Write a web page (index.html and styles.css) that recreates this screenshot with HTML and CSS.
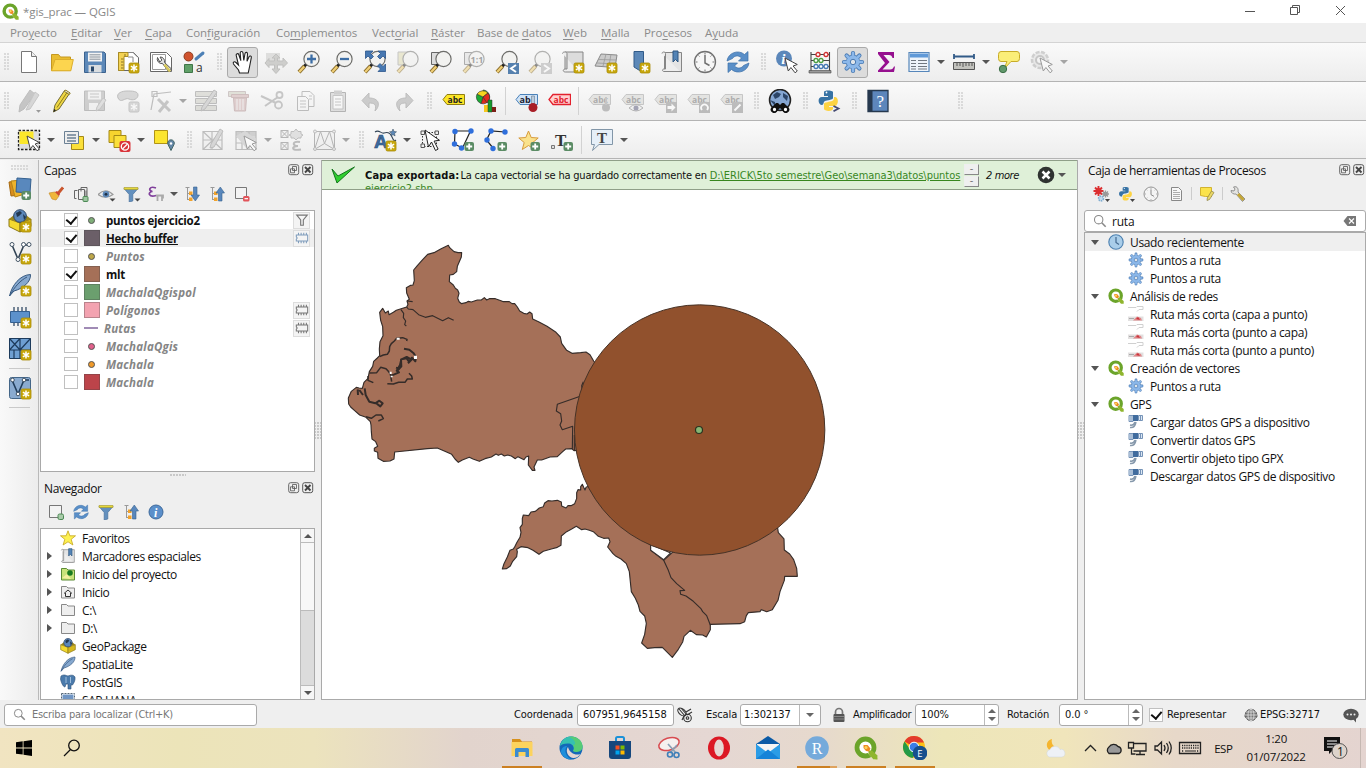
FILE: index.html
```html
<!DOCTYPE html>
<html lang="es">
<head>
<meta charset="utf-8">
<title>*gis_prac — QGIS</title>
<link rel="stylesheet" href="styles.css">
</head>
<body>
<svg class="defs" aria-hidden="true">
<defs>
<!-- shared badges -->
<g id="nb"><rect x="13" y="13" width="10" height="10" rx="1.5" fill="#c8a80c" stroke="#a88c08" stroke-width=".8"/><path d="M18 14.4v7.2M14.9 16.2l6.2 3.6M14.9 19.8l6.2-3.6" stroke="#fff" stroke-width="1.5"/></g>
<g id="pb"><rect x="13.5" y="14" width="9.5" height="9" rx="2" fill="#5b8c65"/><path d="M18.2 15.5v6M15.2 18.5h6" stroke="#fff" stroke-width="1.8"/></g>
<g id="lens"><circle cx="14.5" cy="9" r="7.6" fill="#f2f2f0" stroke="#6d6d6a" stroke-width="1.2"/><path d="M9 14.5l-2 2" stroke="#222" stroke-width="3"/><path d="M7.5 16.2l-5.5 6" stroke="#8a6d2c" stroke-width="4"/><path d="M7.2 16.5l-5 5.4" stroke="#f0cf75" stroke-width="2.2"/></g>
<g id="cursor"><path d="M10 8l3.3 13 2.6-3.5 4.2 5.3 2.2-1.8-4.2-5 4.2-1.5z" fill="#fff" stroke="#444" stroke-width="1"/></g>
<g id="tag"><path d="M6 5.5h17.5v10H6L2 10.5z"/></g>

<symbol id="qgis" viewBox="0 0 24 24"><circle cx="11.500" cy="11.500" r="8.500" fill="#fff" stroke="#6ba42a" stroke-width="4.800"/><path d="M13.500 12l10.500 9-3.500 3.500L12 15z" fill="#fff"/><path d="M14.500 14.500h3.500l5.500 5v4H19.500l-5-5.500z" fill="#8fb52d"/><path d="M9.500 9h4l3 3.500-1.500 3-3-.5-2.500-3z" fill="#ee8a23"/><circle cx="12" cy="11.500" r="1.600" fill="#f9d65c"/></symbol>
<symbol id="new" viewBox="0 0 24 24"><path d="M4.500 1.500h10l5 5v16h-15z" fill="#fff" stroke="#777"/><path d="M14.500 1.500v5h5" fill="#eee" stroke="#777"/></symbol>
<symbol id="open" viewBox="0 0 24 24"><path d="M1.500 20.500V4.500h7l2 2.500h10v13.500z" fill="#e9bd31" stroke="#c59820"/><path d="M1.500 20.800L5 9.500h18.300l-2.500 11.300z" fill="#fcd54f" stroke="#dcae2c"/></symbol>
<symbol id="save" viewBox="0 0 24 24"><path d="M1.500 2h19.500l1.500 1.500V22.500h-21z" fill="#5c88b8" stroke="#3b628e"/><path d="M5 2.500h14v9H5z" fill="#f3f3f3"/><path d="M6.500 4.800h11M6.500 7h11M6.500 9.200h11" stroke="#88929c"/><path d="M5.500 15h13v7.500h-13z" fill="#d9dde0"/><path d="M8 16.500h3v5H8z" fill="#28476a"/></symbol>
<symbol id="layout" viewBox="0 0 24 24"><path d="M2.500 2.500h15l5 5v13h-20z" fill="#fff" stroke="#666"/><path d="M2.500 2.500H12v4H8v14H2.500z" fill="#f3d254" stroke="#a88b24"/><path d="M12 2.500h5l5 5M12 7h5v5" fill="none" stroke="#888"/><path d="M9 4v2M5 9h2.500M5 12h2.500M5 15h2.500M5 18h2.500" stroke="#8b7526"/><use href="#nb"/></symbol>
<symbol id="mgr" viewBox="0 0 24 24"><path d="M1.500 2.500h16l5 5v14h-21z" fill="#fff" stroke="#666"/><path d="M3.500 4.500h13v15h-13z" fill="none" stroke="#9a9a9a"/><path d="M8.500 7.500a4.500 4.500 0 0 0 5 6l6 8 3-2.500-7-6.500a4.400 4.400 0 0 0-4.500-5.500l1.800 3-2 2z" fill="#e2e2e0" stroke="#555"/><path d="M15.500 14.500l5.500 7" stroke="#d8c95c" stroke-width="2.500"/></symbol>
<symbol id="style" viewBox="0 0 24 24"><circle cx="6.500" cy="6.500" r="4.500" fill="#d0532e" stroke="#8c3a1e"/><path d="M2.500 14.500h8v8h-8z" fill="#60a068" stroke="#3f7648"/><path d="M14 9l7-6" stroke="#4d80b6" stroke-width="3" stroke-linecap="round"/><text x="14" y="22" font-family="Open Sans" font-size="12" fill="#333">a</text></symbol>
<symbol id="hand" viewBox="0 0 24 24"><path d="M8.500 23l-1-3-5-6c-1-2 1-3 2.500-1.500L7.500 15 5.200 5.500c-.4-2 2-2.500 2.600-.8l2 6L9.200 3c0-2 2.600-2 2.800 0l.8 7.500L14 3.500c.4-1.800 2.700-1.400 2.500.4l-.5 7.500 2-4.600c.8-1.500 2.700-.8 2.300.8l-1.600 8.400-1.500 7z" fill="#fff" stroke="#222" stroke-width="1.100"/></symbol>
<symbol id="panto" viewBox="0 0 24 24"><path d="M2 3h14v9H2z" fill="#c8c8c6"/><path d="M12 4l4 4h-2.500v3H19V8l4.500 5L19 17.500V15h-5.500v4H16l-4 4.500L8 19h2.500v-4H5v2.500L1 13l4-4.500V11h5.500V8H8z" fill="#aaaaa6" stroke="#8e8e8b"/></symbol>
<symbol id="zin" viewBox="0 0 24 24"><use href="#lens"/><path d="M14.500 4.500v9M10 9h9" stroke="#3d6ea5" stroke-width="2.300"/></symbol>
<symbol id="zout" viewBox="0 0 24 24"><use href="#lens"/><path d="M10 9h9" stroke="#3d6ea5" stroke-width="2.300"/></symbol>
<symbol id="zfull" viewBox="0 0 24 24"><use href="#lens"/><path d="M2.500 1H10L7.500 3.500l3 3L8 9 5 6 2.500 8.500zM22.500 1v7.500L20 6l-3 3-2.500-2.500 3-3L15 1zM22.500 21.500H15l2.500-2.500-3-3 2.500-2.500 3 3 2.500-2.500z" fill="#4778b2" stroke="#2c568b" stroke-width=".8"/></symbol>
<symbol id="zsel" viewBox="0 0 24 24"><path d="M2 2h11v13H2z" fill="#ddd9ac" stroke="#999"/><use href="#lens"/></symbol>
<symbol id="zlay" viewBox="0 0 24 24"><path d="M2.500 2.500h13v12h-13z" fill="#ddd" stroke="#666"/><use href="#lens"/></symbol>
<symbol id="z11" viewBox="0 0 24 24"><path d="M2.500 2.500h13v12h-13z" fill="#ddd" stroke="#666"/><use href="#lens"/><text x="8.500" y="12.500" font-family="Open Sans" font-weight="700" font-size="9" fill="#555">1:1</text></symbol>
<symbol id="zprev" viewBox="0 0 24 24"><use href="#lens"/><path d="M13 13h11v11H13z" fill="#5580ae"/><path d="M21 15l-5 3.500 5 3.500" fill="none" stroke="#fff" stroke-width="2"/></symbol>
<symbol id="znext" viewBox="0 0 24 24"><use href="#lens"/><path d="M13 13h11v11H13z" fill="#aaa"/><path d="M16 15l5 3.500-5 3.500" fill="none" stroke="#fff" stroke-width="2"/></symbol>
<symbol id="map" viewBox="0 0 24 24"><path d="M4 2h18v19H4z" fill="#dcdcdc" stroke="#858585"/><path d="M1.500 3.500c0-2 4.500-2 4.500 0V19H4.500c-3 0-3 3 0 3H18" fill="#eee" stroke="#858585"/><use href="#nb"/></symbol>
<symbol id="map3" viewBox="0 0 24 24"><path d="M7 4l16 1-2 13-7-1-13-1z" fill="#cbcbcb" stroke="#8a8a8a"/><path d="M4 9.500l18 .5M3 13l19 1M12 4l-3 12M17 4l-2 12" stroke="#999" stroke-width=".8"/><use href="#nb"/></symbol>
<symbol id="bmk" viewBox="0 0 24 24"><path d="M7 1.500h9.500V22l-4.700-2L7 17z" fill="#5c88b8" stroke="#315b89"/><use href="#nb"/></symbol>
<symbol id="bmks" viewBox="0 0 24 24"><path d="M4.500 2.500h17v19h-17z" fill="#e4e4e4" stroke="#858585"/><path d="M2 3.500c0-2 3.500-2 3.500 0V19H4c-2 0-2 2.500 0 2.500h16" fill="#eee" stroke="#858585"/><path d="M13 1h5v11l-2.500-2.500L13 12z" fill="#5484b6" stroke="#2f5781"/></symbol>
<symbol id="clock" viewBox="0 0 24 24"><circle cx="12" cy="12" r="10.500" fill="#f6f6f6" stroke="#707070" stroke-width="1.300"/><path d="M12 5v8l4.500 2.500" fill="none" stroke="#707070" stroke-width="1.500"/><path d="M12 2.500v2M12 19.500v2M2.500 12h2M19.500 12h2M5.500 5.500l1 1M18.500 5.500l-1 1M5.500 18.500l1-1M18.500 18.500l-1-1" stroke="#777"/></symbol>
<symbol id="refresh" viewBox="0 0 24 24"><path d="M1 11C2 3 12-1 18.500 4.500L22 1.500v9.500h-9.500l3-3C12 4.500 8 6 6.500 8.500z" fill="#5a8fc8" stroke="#3d70a8" stroke-width=".7"/><path d="M23 13c-1 8-11 12-17.500 6.500L2 22.500V13h9.500l-3 3c3.500 3.500 7.500 2 9-.5z" fill="#5a8fc8" stroke="#3d70a8" stroke-width=".7"/></symbol>
<symbol id="ident" viewBox="0 0 24 24"><circle cx="9" cy="8.500" r="8" fill="#5b87ba"/><text x="6.300" y="14" font-family="Liberation Serif" font-weight="700" font-style="italic" font-size="15" fill="#fff">i</text><use href="#cursor"/></symbol>
<symbol id="abacus" viewBox="0 0 24 24"><path d="M3 2v20M21.500 2v20M3 4.500h18.500M3 10.500h18.500M3 16.500h18.500" stroke="#444" stroke-width="1.100" fill="none"/><path d="M1 20.500h22v2.500H1z" fill="#999" stroke="#444" stroke-width=".6"/><g fill="#fff" stroke-width="1.300"><g stroke="#d12f2f"><circle cx="10" cy="4.500" r="2"/><circle cx="18" cy="4.500" r="2"/></g><g stroke="#4a9d42"><circle cx="8" cy="10.500" r="2"/><circle cx="13" cy="10.500" r="2"/></g><g stroke="#4479b4"><circle cx="8" cy="16.500" r="2"/><circle cx="13" cy="16.500" r="2"/><circle cx="18" cy="16.500" r="2"/></g></g></symbol>
<symbol id="gear" viewBox="0 0 24 24"><g stroke="#4a7ab2" stroke-width="4.200" stroke-linecap="round"><path d="M12 3v18M3 12h18M5.600 5.600l12.800 12.800M18.400 5.600L5.600 18.400"/></g><circle cx="12" cy="12" r="7.200" fill="#4a7ab2"/><g stroke="#8cb8ea" stroke-width="2.600" stroke-linecap="round"><path d="M12 3v18M3 12h18M5.600 5.600l12.800 12.800M18.400 5.600L5.600 18.400"/></g><circle cx="12" cy="12" r="6.500" fill="#8cb8ea"/><circle cx="12" cy="12" r="2.700" fill="#e0e5ea" stroke="#4a7ab2"/></symbol>
<symbol id="sigma" viewBox="0 0 24 24"><path d="M4 2h16v6h-1.500c-.5-2-1.500-3-3.500-3H9.500l6 7-7 7.500H16c2.500 0 3-1 4-3h1l-1 5.500H4v-1.500L11 13 4 4z" fill="#96108f"/></symbol>
<symbol id="table" viewBox="0 0 24 24"><path d="M2 2.500h20v19H2z" fill="#eef4fa" stroke="#5686ba" stroke-width="1.200"/><path d="M3 3.500h18v4H3z" fill="#5f99d8"/><path d="M4 10.500h5M11 10.500h9M4 13.500h5M11 13.500h9M4 16.500h5M11 16.500h9M4 19h5M11 19h9" stroke="#707880"/></symbol>
<symbol id="measure" viewBox="0 0 24 24"><path d="M2 6.500h20M2 4v5M22 4v5" stroke="#325b88" stroke-width="1.800"/><path d="M1.500 12.500h21v7h-21z" fill="#c2c2bd" stroke="#555"/><path d="M5 13v3M8 13v3M11 13v4M14 13v3M17 13v3M20 13v3" stroke="#555"/></symbol>
<symbol id="tips" viewBox="0 0 24 24"><path d="M4 1.500h16q2.500 0 2.500 3v4q0 3-2.500 3h-6L7 19l3-7.500H4q-2.500 0-2.500-3v-4q0-3 2.500-3z" fill="#fbee78" stroke="#c8ac28"/><circle cx="6" cy="19" r="3.700" fill="#60986b" stroke="#3b6d45"/></symbol>
<symbol id="action" viewBox="0 0 24 24"><circle cx="10" cy="10" r="8" fill="#ddd" stroke="#aaa" stroke-width="2.500" stroke-dasharray="4 1.500"/><circle cx="10" cy="10" r="4" fill="#f4f4f4" stroke="#999" stroke-width="2"/><use href="#cursor"/></symbol>

<symbol id="edits" viewBox="0 0 24 24"><path d="M13 1l5 4L7 20l-5 3 1-7z" fill="#999" stroke="#888"/><path d="M18 3l4 3-9 14-4 1z" fill="#bbb" stroke="#999"/><path d="M19 21h5l-2.500 2.800z" fill="#444"/></symbol>
<symbol id="pencil" viewBox="0 0 24 24"><path d="M14.500 1.500l5 3L9 20l-5.500 3L5 16z" fill="#efd744" stroke="#726b38"/><path d="M17 3.500L7 18.500M15.500 1l-1 1.500 4.800 3 .9-1.500z" stroke="#8b7b1b" fill="#eee"/><path d="M3.500 23l.6-3 2 1.300z" fill="#222"/></symbol>
<symbol id="savee" viewBox="0 0 24 24"><path d="M1.500 2h20v19.500h-20z" fill="#aaa" stroke="#888"/><path d="M5 2.500h13v8H5zM6 14h9v7H6z" fill="#eee"/><path d="M7 5h9M7 8h9" stroke="#999"/><path d="M20 9l3 2-6 9-4 2 1-4z" fill="#ccc" stroke="#999"/></symbol>
<symbol id="poly" viewBox="0 0 24 24"><path d="M2 9c-2-5 4-7 9-7s11 0 11 4-5 6-9 4-8 5-11-1z" fill="#bbb" stroke="#888"/><rect x="13" y="13" width="10" height="10" rx="1.500" fill="#bbb" stroke="#999"/><path d="M18 14.500v7M15 16l6 4M15 20l6-4" stroke="#fff" stroke-width="1.300"/></symbol>
<symbol id="vertex" viewBox="0 0 24 24"><path d="M2 21L5 5l17-2M3 2.500h5v5H3z" fill="none" stroke="#888" stroke-width="1.200"/><path d="M10 23l9-11M9 10l12 12" stroke="#999" stroke-width="3"/></symbol>
<symbol id="attrs" viewBox="0 0 24 24"><path d="M1.500 2.500h21v5h-21zM1.500 9.500h21v5h-21zM1.500 16.500h21v5h-21z" fill="#c9c9c0" stroke="#888"/><path d="M20 1l3 2L11 20l-4 2 1-4z" fill="#bbb" stroke="#888"/></symbol>
<symbol id="trash" viewBox="0 0 24 24"><path d="M1.500 2.500h17v5h-17z" fill="#ccb" stroke="#a99"/><path d="M4.500 5.500h17v3h-17zM6.500 9h13l-1 13h-11z" fill="#caa" stroke="#a88"/><path d="M10 10v11M13 10v11M16 10v11" stroke="#eee"/></symbol>
<symbol id="cut" viewBox="0 0 24 24"><path d="M1 7l15 7M5 17L18 8" stroke="#999" stroke-width="2"/><circle cx="19.500" cy="6" r="3" fill="none" stroke="#999" stroke-width="1.800"/><circle cx="18.500" cy="16" r="3.500" fill="none" stroke="#999" stroke-width="1.800"/></symbol>
<symbol id="copy" viewBox="0 0 24 24"><path d="M9 2.500h8l4 4v11H9z" fill="#f6f6f6" stroke="#888"/><path d="M4.500 7.500h8l3 3v11h-11z" fill="#f6f6f6" stroke="#888"/><path d="M7 12h6M7 15h6M7 18h6M16 7h3M16 10h3" stroke="#999"/></symbol>
<symbol id="paste" viewBox="0 0 24 24"><path d="M4.500 3.500h15v19h-15z" fill="#ccc" stroke="#777"/><path d="M7 6.500h10v13.500H7z" fill="#fafafa" stroke="#999"/><path d="M8 1.500h8v4H8z" fill="#aaa"/><path d="M9 10h6M9 13h6M9 16h6" stroke="#999"/></symbol>
<symbol id="undo" viewBox="0 0 24 24"><path d="M10 4v5c10 0 12 7 6 13 2-7-1-8-6-8v5L3 11.500z" fill="#a5a5a5" stroke="#888"/></symbol>
<symbol id="redo" viewBox="0 0 24 24"><path d="M14 4v5C4 9 2 16 8 22c-2-7 1-8 6-8v5l7-7.500z" fill="#a5a5a5" stroke="#888"/></symbol>
<symbol id="abc" viewBox="0 0 24 24"><g fill="#fce627" stroke="#8f7d13"><use href="#tag"/></g><text x="6.500" y="13.500" font-family="Open Sans" font-weight="700" font-size="8.500" fill="#222">abc</text></symbol>
<symbol id="diag" viewBox="0 0 24 24"><path d="M9 1a7 7 0 0 1 6 10L9 8z" fill="#1bab35" stroke="#333" stroke-width=".6"/><path d="M9 8l6 3a7 7 0 0 1-8 3.500z" fill="#e02b1d" stroke="#333" stroke-width=".6"/><path d="M9 8l-2 6.500A7 7 0 0 1 3 5z" fill="#1bab35" stroke="#333" stroke-width=".6"/><path d="M9 8L3 5a7 7 0 0 1 11-1z" fill="#f6d61d" stroke="#333" stroke-width=".6"/><path d="M9 8l5-4a7 7 0 0 1-1 10z" fill="#e02b1d" stroke="#333" stroke-width=".6"/><path d="M10 16h4v7h-4z" fill="#f6c81d"/><path d="M14 11h4v12h-4z" fill="#159b2b" stroke="#333" stroke-width=".5"/><path d="M18 18h4v5h-4z" fill="#7c2017"/></symbol>
<symbol id="abpin" viewBox="0 0 24 24"><g fill="#cfe3f8" stroke="#4a81b8"><use href="#tag"/></g><text x="5.500" y="13.500" font-family="Open Sans" font-weight="700" font-size="9" fill="#223">ab</text><path d="M17.500 7h3v9h-3z" fill="#bcd" stroke="#789" stroke-width=".7"/><circle cx="19" cy="18.500" r="4.500" fill="#a81d26"/></symbol>
<symbol id="abcr" viewBox="0 0 24 24"><g fill="#ffd0d0" stroke="#e3202d" stroke-width="1.300"><use href="#tag"/></g><text x="6.500" y="13.500" font-family="Open Sans" font-weight="700" font-size="8.500" fill="#e3202d">abc</text></symbol>
<symbol id="abgr" viewBox="0 0 24 24"><g fill="#d4d4d0" stroke="#999"><use href="#tag"/></g><text x="6" y="13.500" font-family="Open Sans" font-weight="700" font-size="8.500" fill="#666">abc</text></symbol>
<symbol id="meta" viewBox="0 0 24 24"><circle cx="12" cy="11" r="10.500" fill="#85a6d2" stroke="#222" stroke-width="1.500"/><path d="M5 6l4-3 4 2-2 3-4 2zM15 4l5 3-1 5-4-4zM2 11l5 2v4z" fill="#2c4567"/><path d="M8 14h2l2 2 2-2h2l5 5a3 3 0 0 1-6 3l-3-3-3 3a3 3 0 0 1-6-3z" fill="#111"/><circle cx="6.500" cy="20.500" r="2.400" fill="#fff" stroke="#111" stroke-width="1.500"/><circle cx="17.500" cy="20.500" r="2.400" fill="#fff" stroke="#111" stroke-width="1.500"/></symbol>
<symbol id="py" viewBox="0 0 24 24"><path d="M7 3c0-2 8-2 9 0v6c0 2-6 2-8 3s-1 4-3 4c-4 0-5-8 0-8h6V7H7z" fill="#3772a4"/><path d="M17 8c5-1 5 8 1 9h-6v1h4v2c-1 3-9 2-9 0v-5c0-2 6-2 8-3s2-2 2-4z" fill="#fdd343"/><circle cx="9.500" cy="3.500" r=".9" fill="#fff"/></symbol>
<symbol id="pycon" viewBox="0 0 24 24"><use href="#py" width="24" height="24"/><path d="M16.500 17l5 2.500-5 2.800" fill="none" stroke="#444a72" stroke-width="1.800"/></symbol>
<symbol id="help" viewBox="0 0 24 24"><path d="M2 1.500h20v21H2z" fill="#5d86bb" stroke="#26384e" stroke-width="1.300"/><path d="M2 1.500h4.500v21H2z" fill="#26384e"/><text x="10.500" y="17.500" font-family="Liberation Serif" font-size="17" fill="#fff">?</text></symbol>

<symbol id="sel" viewBox="0 0 24 24"><path d="M1.500 2.500h21v19h-21z" fill="#ddd" stroke="#222" stroke-width="1.300" stroke-dasharray="2.500 1.500"/><path d="M2.500 3.500h14V16h-14z" fill="#fbe72b"/><use href="#cursor"/></symbol>
<symbol id="selform" viewBox="0 0 24 24"><path d="M9.500 8.500h12v13h-12z" fill="#fbe03a" stroke="#a48917"/><path d="M2.500 3.500h14v12h-14z" fill="#eee" stroke="#6b8094"/><path d="M5 7h9M5 10h9M5 13h9" stroke="#6b8094" stroke-width="1.300"/></symbol>
<symbol id="desel" viewBox="0 0 24 24"><path d="M2 2.500h12v12H2z" fill="#f7d42e" stroke="#a48917"/><path d="M7 7.500h12v12H7z" fill="#fbe03a" stroke="#a48917"/><rect x="12.500" y="13" width="11" height="11" rx="2" fill="#d9343a"/><circle cx="18" cy="18.500" r="3.700" fill="none" stroke="#fff" stroke-width="1.300"/><path d="M15.500 21l5-5" stroke="#fff" stroke-width="1.300"/></symbol>
<symbol id="selloc" viewBox="0 0 24 24"><path d="M2.500 2.500h13v13h-13z" fill="#fce52e" stroke="#b09317"/><path d="M19 22.500l-3-6a3.300 3.300 0 1 1 6 0z" fill="#6487a8" stroke="#466"/><circle cx="19" cy="15.500" r="1.200" fill="#fff"/></symbol>
<symbol id="d1" viewBox="0 0 24 24"><path d="M2 3.500h19v18H2zM2 12h19M2 3.500l19 18M21 3.500l-19 18M11 3.500v18" stroke="#888" fill="#eee" stroke-width="1.200"/><path d="M19 1l3 2-9 16-4 1 1-4z" fill="#bbb" stroke="#888"/></symbol>
<symbol id="d2" viewBox="0 0 24 24"><path d="M2 3h20v5H2z" fill="#aaa"/><path d="M2 3.500h20v18H2zM2 9h20M2 15h20M8 3.500v18M15 3.500v18" stroke="#888" fill="none" stroke-width="1.200"/><path d="M2 8l9-5 11 8-9 10z" fill="#bbb"/><use href="#cursor"/></symbol>
<symbol id="d3" viewBox="0 0 24 24"><path d="M2 2.500h7v7H2zM2 14.500h7v7H2zM2 2.500l7 7M9 2.500l-7 7M2 14.500l7 7M9 14.500l-7 7" stroke="#777" fill="#eee"/><path d="M17 1l2 2.500h3V6l2 1-2 1.500V10h-3L17 12l-2-2h-3V8l-2-1 2-1V3.500h3z" fill="#ccc" stroke="#888"/><path d="M21 14c-8-1-8 4-2 4-7 0-7 5 3 3.500" stroke="#888" stroke-width="2" fill="none"/></symbol>
<symbol id="d4" viewBox="0 0 24 24"><path d="M2.500 3.500h20v18h-20zM2.500 21.500l6-18 4 12 5-12 5 18-10-6z" stroke="#777" fill="#eee"/><g fill="#ddd" stroke="#888"><circle cx="3" cy="3.500" r="1.500"/><circle cx="22" cy="3.500" r="1.500"/><circle cx="3" cy="21" r="1.500"/><circle cx="22" cy="21" r="1.500"/></g></symbol>
<symbol id="anno" viewBox="0 0 24 24"><path d="M2 4c4-3 6 2 9 1s6-1 8 4 3 4 4 3" fill="none" stroke="#345" stroke-width="1.100"/><text x="1" y="20" font-family="Liberation Sans" font-weight="700" font-size="19" fill="#3e6a9d" stroke="#244a76" stroke-width=".6">A</text><path d="M20 1l1 2.500 2.500.3-2 1.700.6 2.500-2.100-1.300L17.900 8l.6-2.500-2-1.700 2.500-.3z" fill="#5c88b8" stroke="#345" stroke-width=".5"/><use href="#nb"/></symbol>
<symbol id="selann" viewBox="0 0 24 24"><path d="M4.500 4.500h14v14h-14z" fill="none" stroke="#333" stroke-dasharray="1.500 1.500"/><path d="M3 3h3.500v3.500H3zM17 3h3.500v3.500H17zM3 16h3.500v3.500H3z" fill="#eee" stroke="#555"/><path d="M7 2l3.500 17 3-5 4 8.500 2.600-1.400-4-8 5.400-.8z" fill="#fff" stroke="#222"/></symbol>
<symbol id="apoly" viewBox="0 0 24 24"><path d="M4 3h15.500l-8 17L3.500 16z" fill="#fff" stroke="#222" stroke-width="1.200"/><g fill="#2f6fdc"><circle cx="4" cy="3.500" r="2.700"/><circle cx="20" cy="3" r="2.700"/><circle cx="3.500" cy="16" r="2.700"/><circle cx="10.500" cy="20" r="2.700"/></g><use href="#pb"/></symbol>
<symbol id="aline" viewBox="0 0 24 24"><path d="M21 4L7 3 2.500 12 9 20" fill="none" stroke="#222" stroke-width="1.200"/><g fill="#2f6fdc"><circle cx="7" cy="3" r="2.700"/><circle cx="21" cy="4" r="2.700"/><circle cx="3" cy="12" r="2.700"/><circle cx="9" cy="20.500" r="2.700"/></g><use href="#pb"/></symbol>
<symbol id="astar" viewBox="0 0 24 24"><path d="M11.500 3l2.700 6.500 7 .5-5.400 4.500 1.900 7-6.200-4-6.200 4 1.900-7L1.800 10l7-.5z" fill="#fae28c" stroke="#d79b3c"/><use href="#pb"/></symbol>
<symbol id="atext" viewBox="0 0 24 24"><text x="5" y="18" font-family="Liberation Serif" font-weight="700" font-size="17" fill="#333">T</text><path d="M1.500 17.500h3v3h-3z" fill="#ddd" stroke="#777"/><use href="#pb"/></symbol>
<symbol id="tbal" viewBox="0 0 24 24"><path d="M1.500 1.500h21v15H9l-6.500 6 2-6h-3z" fill="#e6eff8" stroke="#8296a8"/><text x="7" y="14.500" font-family="Liberation Serif" font-size="15" font-weight="700" fill="#444">T</text></symbol>

<symbol id="dsm" viewBox="0 0 24 24"><path d="M1 5l9-1 2 14-9 1z" fill="#d98e1d" stroke="#a76a12"/><path d="M3 4l12-1 2 14-10 3z" fill="#eeb32d" stroke="#b58318"/><path d="M9 1l14 1-1 14-14-1z" fill="#5988bd" stroke="#34608f"/><use href="#pb"/></symbol>
<symbol id="gpkg" viewBox="0 0 24 24"><path d="M1 10l11 4v9L1 17.500z" fill="#f3d92f" stroke="#8c7917"/><path d="M23 10l-11 4v9l11-5.500z" fill="#d5b71f" stroke="#8c7917"/><path d="M1 10l5-4h12l5 4-11 4z" fill="#9c861a"/><circle cx="12" cy="7" r="6.300" fill="#5a86ba" stroke="#2c4668"/><path d="M8 4l4-2 2 2-3 3-2 1zM15 5l3 3-2 3z" fill="#22374f"/></symbol>
<symbol id="gpkgn" viewBox="0 0 24 24"><use href="#gpkg" width="24" height="24"/><use href="#nb"/></symbol>
<symbol id="vnew" viewBox="0 0 24 24"><path d="M4 4l6 14 6-14h4" fill="none" stroke="#345" stroke-width="1.600"/><g fill="#fff" stroke="#456"><circle cx="4" cy="3.500" r="2"/><circle cx="15.500" cy="3.500" r="2"/><circle cx="21" cy="3.500" r="2"/><circle cx="10" cy="18.500" r="2"/></g><use href="#nb"/></symbol>
<symbol id="feather" viewBox="0 0 24 24"><path d="M1.500 23C4 12 12 2 22.500 1.500 23 9 15 15.500 6 18z" fill="#86a8cf" stroke="#36587f"/><path d="M2 22.500C6 14 13 7 19 4" fill="none" stroke="#36587f"/></symbol>
<symbol id="feathern" viewBox="0 0 24 24"><use href="#feather" width="24" height="24"/><use href="#nb"/></symbol>
<symbol id="memn" viewBox="0 0 24 24"><path d="M6 2v19M10 2v19M14 2v19M18 2v19" stroke="#334b66" stroke-width="1.300"/><path d="M2.500 6.500h19v11h-19z" fill="#5c91cb" stroke="#345f8f"/><use href="#nb"/></symbol>
<symbol id="meshn" viewBox="0 0 24 24"><path d="M1.500 1.500h21v20h-21z" fill="#6e9fd2" stroke="#1d3b5c"/><path d="M12 1.500v20M1.500 13h21M1.500 1.500L12 13M12 1.500L1.500 13M12 13L22.500 1.500M6 13v8.500" fill="none" stroke="#1d3b5c" stroke-width="1.200"/><use href="#nb"/></symbol>
<symbol id="virt" viewBox="0 0 24 24"><rect x="1.500" y="1.500" width="21" height="21" rx="2" fill="#8aabd0" stroke="#446688"/><path d="M4 4l6 14L16 4h5" fill="none" stroke="#223e5c" stroke-width="1.600"/><g fill="#fff" stroke="#456"><circle cx="4.500" cy="4" r="1.800"/><circle cx="16" cy="4" r="1.800"/><circle cx="10" cy="18" r="1.800"/></g><use href="#nb"/></symbol>

<symbol id="brush" viewBox="0 0 16 16"><path d="M15 1.500l-5 6" stroke="#c9552c" stroke-width="2.800"/><path d="M1 7l6-1 4 4-3 4-4-1z" fill="#f0b63a" stroke="#c98f2d" stroke-width=".7"/><path d="M7 6l4 4 1-2-3-3z" fill="#cf4630"/></symbol>
<symbol id="addgrp" viewBox="0 0 16 16"><path d="M5.500 3.500h6v10h-6zM3.500 12.500h-2v-8h3M13 11V4.500M8 5.500V1.500h6v9" fill="none" stroke="#666"/><rect x="10" y="10.500" width="5" height="5" rx="1" fill="#9cc59f" stroke="#4c8a55"/></symbol>
<symbol id="eye" viewBox="0 0 16 16"><path d="M0 8.500Q7.500 1 15 8.500 7.500 14 0 8.500z" fill="#e9ecef" stroke="#999" stroke-width="1.100"/><circle cx="8" cy="8.300" r="3.300" fill="#5d88b8"/><circle cx="8" cy="8.300" r="1.400" fill="#1d2e43"/></symbol>
<symbol id="funnel" viewBox="0 0 16 16"><path d="M1 2.500h14l-5.200 6V15l-3.600 1V8.500z" fill="#6390be" stroke="#49719c" stroke-width=".7"/><path d="M1 1.500h14v2H1z" fill="#e6d83a" stroke="#a19528" stroke-width=".6"/></symbol>
<symbol id="eps" viewBox="0 0 16 16"><path d="M8 2C1-.5 0 5 4.500 5.500-1 6 1 12 8 9.500" fill="none" stroke="#80409b" stroke-width="1.700"/><path d="M8 9.500h7v3M9.500 10v5M14 9v6" fill="none" stroke="#aaa" stroke-width="1.800"/></symbol>
<symbol id="expand" viewBox="0 0 16 16"><path d="M1.500 1.500h4M3.500 2v12M4 7.500h3M4 13.500h3" stroke="#999" fill="none"/><path d="M5 5.500h3.500V9H5zM5 11.500h3.500V15H5z" fill="#f3a32b"/><path d="M9.500 1h3.500v8h2.500l-4.200 6L7 9h2.500z" fill="#5987bc" stroke="#38638f" stroke-width=".6"/></symbol>
<symbol id="collapse" viewBox="0 0 16 16"><path d="M1.500 1.500h4M3.500 2v12M4 7.500h3M4 13.500h3" stroke="#999" fill="none"/><path d="M5 5.500h3.500V9H5zM5 11.500h3.500V15H5z" fill="#f3a32b"/><path d="M9.500 15h3.500V7h2.500l-4.200-6L7 7h2.500z" fill="#5987bc" stroke="#38638f" stroke-width=".6"/></symbol>
<symbol id="rmlay" viewBox="0 0 16 16"><path d="M1.500 1.500h11v11h-11z" fill="#f3f3f3" stroke="#777"/><rect x="9" y="10" width="6.500" height="5.500" rx="1.500" fill="#e2545a"/><path d="M10.500 12.700h3.500" stroke="#fff" stroke-width="1.200"/></symbol>
<symbol id="addlay" viewBox="0 0 16 16"><path d="M1.500 1.500h12v12h-12z" fill="#f3f3f3" stroke="#777"/><rect x="10" y="10" width="5.500" height="5.500" rx="1.500" fill="#a9cba9" stroke="#4c8a55"/></symbol>
<symbol id="info" viewBox="0 0 16 16"><circle cx="8" cy="8" r="7" fill="#5b8fca" stroke="#3f6a9b"/><text x="6" y="12.500" font-family="Liberation Serif" font-weight="700" font-style="italic" font-size="12" fill="#fff">i</text></symbol>
<symbol id="star" viewBox="0 0 16 16"><path d="M8 .8l1.900 5H15.500l-4.300 3.500 1.700 5.700L8 11.800 3.100 15l1.700-5.700L.5 5.800h5.600z" fill="#fdf152" stroke="#c4a31d" stroke-width=".8"/></symbol>
<symbol id="foldp" viewBox="0 0 16 16"><path d="M1.500 14V2.500h5L8 4h6.500v10z" fill="#c8e37b" stroke="#5c8c37"/><path d="M2 12l5-4 4 5z" fill="#f5f0a0"/><circle cx="10" cy="7" r="2.800" fill="#197b21"/></symbol>
<symbol id="fold" viewBox="0 0 16 16"><path d="M1.500 13.500v-11h5L8 4h6.500v9.500z" fill="#eee" stroke="#888"/></symbol>
<symbol id="foldh" viewBox="0 0 16 16"><path d="M1.500 14V2.500h5L8 4h6.500v10z" fill="#eee" stroke="#888"/><path d="M4 9.500L8 6l4 3.500M5.500 9v3.500h5V9" fill="none" stroke="#333"/></symbol>
<symbol id="pg" viewBox="0 0 16 16"><path d="M1 2c3-2 5-.5 7 0 3-1.500 6-1 7 1 .5 3-1 6-2.500 8H11v4H8v-5H6l-1 3C3 13 1 8 .5 5z" fill="#4b7bac" stroke="#2d5078" stroke-width=".6"/><path d="M6 3v6M10.500 3v6" stroke="#9fbfdd"/></symbol>
<symbol id="hana" viewBox="0 0 16 16"><path d="M2.500 2.500h11v11h-11z" fill="#7196c4"/><path d="M1.500 1.500h13v12h-13z" fill="none" stroke="#567" stroke-dasharray="2 1"/></symbol>
<symbol id="chip" viewBox="0 0 16 16"><path d="M4 2v12M7 2v12M10 2v12M13 2v12" stroke="currentColor" stroke-width="1.200"/><path d="M1.500 4.500h13v7h-13V9.300l1-1.300-1-1.300z" fill="#f4f4f4" stroke="currentColor" stroke-width="1.200"/></symbol>
<symbol id="filt" viewBox="0 0 16 16"><path d="M2 2.500h12L9.500 8v6h-3V8z" fill="#f6f6f6" stroke="#777" stroke-width="1.300"/></symbol>
<symbol id="float" viewBox="0 0 12 12"><rect x=".7" y=".7" width="10" height="10" rx="2" fill="none" stroke="#666"/><path d="M4.500 2.500h4v4h-4zM2.500 4.800h4v4h-4z" fill="#eee" stroke="#555" stroke-width=".8"/></symbol>
<symbol id="close" viewBox="0 0 12 12"><rect x=".7" y=".7" width="10" height="10" rx="2" fill="none" stroke="#555"/><path d="M3 3l5.500 5.500M8.500 3L3 8.500" stroke="#444" stroke-width="1.900"/></symbol>
<symbol id="gears" viewBox="0 0 16 16"><path d="M5.500 0v10M.5 5h10M2 1.500l7 7M9 1.500l-7 7" stroke="#dc2f31" stroke-width="1.900"/><circle cx="5.500" cy="5" r="3" fill="#dc2f31"/><path d="M12.500 4.500v7M9 8h7M10 5.500l5 5M15 5.500l-5 5" stroke="#999" stroke-width="1.300"/><circle cx="12.500" cy="8" r="2.200" fill="#999"/><circle cx="8" cy="12.500" r="2.400" fill="#c5dcee" stroke="#7faccf" stroke-width="1.600" stroke-dasharray="1.400 .8"/></symbol>
<symbol id="doc" viewBox="0 0 16 16"><path d="M3.500 1.500h7l3 3v10h-10z" fill="#f8f8f8" stroke="#888"/><path d="M5 6.500h7M5 8.500h7M5 10.500h7M5 12.500h7M5 4.500h4" stroke="#999" stroke-width=".8"/></symbol>
<symbol id="note" viewBox="0 0 16 16"><path d="M1.500 1.500h11v9h-6l-5-1z" fill="#fbe34b" stroke="#d2b330"/><path d="M12.500 5l2.500 1.500-4.500 7-2.500 1 .3-2.500z" fill="#ead868" stroke="#8a7e40" stroke-width=".7"/></symbol>
<symbol id="wrench" viewBox="0 0 16 16"><path d="M1 4.500l3 .5L5 3 3.500 1C8-.5 8.500 4 8 6l7 7-2.500 2.500L6 8C3.500 8.500 1 7 1 4.500z" fill="#e4e4e2" stroke="#888" stroke-width=".9"/><path d="M8 8l5.500 6" stroke="#c4a637" stroke-width="2.800"/></symbol>
<symbol id="clk" viewBox="0 0 16 16"><circle cx="8" cy="8" r="7.200" fill="#a9cde9" stroke="#4c80b0" stroke-width="1.100"/><path d="M8 3v5.500l3 2" stroke="#44698f" fill="none" stroke-width="1.200"/></symbol>
<symbol id="route" viewBox="0 0 16 16"><path d="M0 1.500h8l1-1h6v3h-4l-2 2" fill="none" stroke="#d0d0d0"/><path d="M0 10.500h15.500V15H0z" fill="#e2e0e0"/><path d="M5 14.500l4-4 4 1.500 1 2.500z" fill="#e0888a"/><path d="M8 13l2-2 2 3z" fill="#c9353c"/><path d="M1 12.500h5" stroke="#aaa"/></symbol>
<symbol id="gps" viewBox="0 0 16 16"><path d="M1 1.500h4v6H1zM10.500 1.500h4v5h-4z" fill="#dce7f3" stroke="#7794b8"/><path d="M5 1h5v6H5z" fill="#416c9e"/><path d="M3 2v5M12.500 2v4" stroke="#7794b8"/><path d="M8 8c-1 5-3 6-6 5.500M7 8c-1 3-3 3.500-5 3" fill="none" stroke="#8799ac" stroke-width="1.500"/></symbol>
<symbol id="mag" viewBox="0 0 16 16"><circle cx="6.500" cy="6.500" r="4.800" fill="none" stroke="#888" stroke-width="1.200"/><path d="M10 10l4.500 4.500" stroke="#888" stroke-width="1.800"/></symbol>
<symbol id="extent" viewBox="0 0 16 16"><g fill="none" stroke="#333" stroke-width="1.100"><ellipse cx="5" cy="5" rx="4.800" ry="3" transform="rotate(40 5 5)"/><path d="M2 2l6 7M4 1l6 7M9 5l5-3M10 8l5-3M7 9l-2 4"/><circle cx="10.500" cy="11" r="3.800"/><circle cx="10.500" cy="11" r="1.300"/></g></symbol>
<symbol id="lock" viewBox="0 0 16 16"><path d="M4.500 8V5a3.500 3.500 0 0 1 7 0v3" fill="none" stroke="#777" stroke-width="1.700"/><rect x="2.500" y="7" width="11" height="8" rx="1" fill="#555"/><path d="M3 9.500h10M3 12h10" stroke="#888"/></symbol>
<symbol id="globe" viewBox="0 0 16 16"><path d="M1 9L3 5.500h10L15 9l-2 2H3z" fill="#777"/><circle cx="8" cy="8" r="5.800" fill="#777" stroke="#666"/><path d="M1 8h14M8 2v12M3 5h10M3 11h10" stroke="#eee" stroke-width=".7"/><ellipse cx="8" cy="8" rx="3" ry="6" fill="none" stroke="#eee" stroke-width=".7"/></symbol>
<symbol id="bubble" viewBox="0 0 16 16"><ellipse cx="8" cy="7.500" rx="7.700" ry="5.800" fill="#555"/><path d="M10 12l3 3.500v-5z" fill="#555"/><circle cx="4.500" cy="7.500" r="1" fill="#eee"/><circle cx="8" cy="7.500" r="1" fill="#eee"/><circle cx="11.500" cy="7.500" r="1" fill="#eee"/></symbol>
</defs>
</svg>

<div class="window">
<header class="titlebar">
  <svg class="logo"><use href="#qgis"/></svg><span class="caption">*gis_prac — QGIS</span>
  <svg class="winbtns" viewBox="0 0 120 16"><path d="M-1 9.500h10M44.500 5.500h7v7h-7zM46.500 5V3.500h7v7H52M90 4l9 9M99 4l-9 9" fill="none" stroke="#555"/></svg>
</header>
<nav class="menubar">
  <span style="width:61px">Pro<u>y</u>ecto</span><span style="width:43px"><u>E</u>ditar</span><span style="width:31px"><u>V</u>er</span><span style="width:41px"><u>C</u>apa</span><span style="width:90px">Con<u>f</u>iguración</span><span style="width:96px">Co<u>m</u>plementos</span><span style="width:59px">Vect<u>o</u>rial</span><span style="width:46px"><u>R</u>áster</span><span style="width:86px">Base de <u>d</u>atos</span><span style="width:38px"><u>W</u>eb</span><span style="width:43px"><u>M</u>alla</span><span style="width:61px">Pro<u>c</u>esos</span><span>A<u>y</u>uda</span>
</nav>

<div class="toolbar">
  <i class="hd first"></i>
  <b><svg><use href="#new"/></svg></b><b><svg><use href="#open"/></svg></b><b><svg><use href="#save"/></svg></b><b><svg><use href="#layout"/></svg></b><b><svg><use href="#mgr"/></svg></b><b><svg><use href="#style"/></svg></b>
  <i class="hd"></i>
  <b class="on"><svg><use href="#hand"/></svg></b><b class="dim"><svg><use href="#panto"/></svg></b><b><svg><use href="#zin"/></svg></b><b><svg><use href="#zout"/></svg></b><b><svg><use href="#zfull"/></svg></b><b class="dim"><svg><use href="#zsel"/></svg></b><b><svg><use href="#zlay"/></svg></b><b class="dim"><svg><use href="#z11"/></svg></b><b><svg><use href="#zprev"/></svg></b><b class="dim"><svg><use href="#znext"/></svg></b><b><svg><use href="#map"/></svg></b><b><svg><use href="#map3"/></svg></b><b><svg><use href="#bmk"/></svg></b><b><svg><use href="#bmks"/></svg></b><b><svg><use href="#clock"/></svg></b><b><svg><use href="#refresh"/></svg></b>
  <i class="hd"></i>
  <b><svg><use href="#ident"/></svg></b><b><svg><use href="#abacus"/></svg></b><b class="on"><svg><use href="#gear"/></svg></b><b><svg><use href="#sigma"/></svg></b><b><svg><use href="#table"/></svg></b><i class="ar"></i><b><svg><use href="#measure"/></svg></b><i class="ar"></i><b><svg><use href="#tips"/></svg></b><b class="dim"><svg><use href="#action"/></svg></b><i class="ar dim"></i>
</div>
<div class="toolbar">
  <i class="hd first"></i>
  <b class="dim"><svg><use href="#edits"/></svg></b><b><svg><use href="#pencil"/></svg></b><b class="dim"><svg><use href="#savee"/></svg></b><b class="dim"><svg><use href="#poly"/></svg></b><b class="dim"><svg><use href="#vertex"/></svg></b><i class="ar dim"></i><b class="dim"><svg><use href="#attrs"/></svg></b><b class="dim"><svg><use href="#trash"/></svg></b><b class="dim"><svg><use href="#cut"/></svg></b><b class="dim"><svg><use href="#copy"/></svg></b><b class="dim"><svg><use href="#paste"/></svg></b><b class="dim"><svg><use href="#undo"/></svg></b><b class="dim"><svg><use href="#redo"/></svg></b>
  <i class="hd"></i>
  <b><svg><use href="#abc"/></svg></b><b><svg><use href="#diag"/></svg></b><i class="sep"></i><b><svg><use href="#abpin"/></svg></b><b><svg><use href="#abcr"/></svg></b><i class="sep"></i>
  <b class="dim"><svg viewBox="0 0 24 24"><use href="#abgr" width="24" height="24"/><circle cx="19" cy="18.500" r="4" fill="#888"/><path d="M18 8h2v8h-2z" fill="#999"/></svg></b>
  <b class="dim"><svg viewBox="0 0 24 24"><use href="#abgr" width="24" height="24"/><path d="M9 19q7-7 14 0-7 6-14 0z" fill="#eee" stroke="#777"/><circle cx="16" cy="19" r="2.500" fill="#557"/></svg></b>
  <b class="dim"><svg viewBox="0 0 24 24"><use href="#abgr" width="24" height="24"/><path d="M13 13h11v11H13z" fill="#888"/><path d="M14.500 17h4v-2.500l4 4-4 4V20h-4z" fill="#fff"/></svg></b>
  <b class="dim"><svg viewBox="0 0 24 24"><use href="#abgr" width="24" height="24"/><path d="M13 13h11v11H13z" fill="#888"/><path d="M16 21a3.300 3.300 0 1 1 5 0" stroke="#fff" stroke-width="1.800" fill="none"/></svg></b>
  <b class="dim"><svg viewBox="0 0 24 24"><use href="#abgr" width="24" height="24"/><path d="M13 13h11v11H13z" fill="#888"/><path d="M15.500 21.500l6-6" stroke="#fff" stroke-width="2"/></svg></b>
  <i class="hd"></i><b><svg><use href="#meta"/></svg></b><i class="hd"></i><b><svg><use href="#pycon"/></svg></b><i class="hd"></i><b><svg><use href="#help"/></svg></b><i class="hd far"></i>
</div>
<div class="toolbar last">
  <i class="hd first"></i>
  <b><svg><use href="#sel"/></svg></b><i class="ar"></i><b><svg><use href="#selform"/></svg></b><i class="ar"></i><b><svg><use href="#desel"/></svg></b><i class="ar"></i><b><svg><use href="#selloc"/></svg></b>
  <i class="hd"></i>
  <b class="dim"><svg><use href="#d1"/></svg></b><b class="dim"><svg><use href="#d2"/></svg></b><i class="ar dim"></i><b class="dim"><svg><use href="#d3"/></svg></b><b class="dim"><svg><use href="#d4"/></svg></b><i class="ar dim"></i>
  <i class="hd"></i>
  <b><svg><use href="#anno"/></svg></b><i class="ar"></i><b><svg><use href="#selann"/></svg></b><b><svg><use href="#apoly"/></svg></b><b><svg><use href="#aline"/></svg></b><b><svg><use href="#astar"/></svg></b><b><svg><use href="#atext"/></svg></b><i class="sep"></i><b><svg><use href="#tbal"/></svg></b><i class="ar"></i>
</div>

<main class="work">
  <aside class="rail">
    <i class="hdh"></i>
    <svg><use href="#dsm"/></svg><svg><use href="#gpkgn"/></svg><svg><use href="#vnew"/></svg><svg><use href="#feathern"/></svg><svg><use href="#memn"/></svg><svg><use href="#meshn"/></svg>
    <i class="rule"></i><svg><use href="#virt"/></svg><i class="rule"></i>
  </aside>

  <section class="dock left">
    <div class="dtitle"><span>Capas</span><svg><use href="#float"/></svg><svg><use href="#close"/></svg></div>
    <div class="dtools">
      <svg><use href="#brush"/></svg><svg><use href="#addgrp"/></svg><svg class="menu" viewBox="0 0 16 16"><use href="#eye" width="16" height="16"/><path d="M11.500 12.500h6l-3 3z" fill="#444"/></svg><svg class="menu" viewBox="0 0 16 16"><use href="#funnel" width="16" height="16"/><path d="M11.500 12.500h6l-3 3z" fill="#444"/></svg><svg><use href="#eps"/></svg><i class="ar"></i><svg><use href="#expand"/></svg><svg><use href="#collapse"/></svg><svg><use href="#rmlay"/></svg>
    </div>
    <div class="layers">
      <div class="row"><i class="cb on"></i><i class="dot" style="background:#7fae78"></i><span class="nm">puntos ejercicio2</span><em><svg><use href="#filt"/></svg></em></div>
      <div class="row cur"><i class="cb on"></i><i class="sw" style="background:#6b5f68"></i><span class="nm"><u>Hecho buffer</u></span><em class="blue"><svg><use href="#chip"/></svg></em></div>
      <div class="row"><i class="cb"></i><i class="dot" style="background:#bda649"></i><span class="nm off">Puntos</span></div>
      <div class="row"><i class="cb on"></i><i class="sw" style="background:#a57058"></i><span class="nm">mlt</span></div>
      <div class="row"><i class="cb"></i><i class="sw" style="background:#6b9f6e"></i><span class="nm off">MachalaQgispol</span></div>
      <div class="row"><i class="cb"></i><i class="sw" style="background:#f3a2b0"></i><span class="nm off">Polígonos</span><em><svg><use href="#chip"/></svg></em></div>
      <div class="row"><i class="cb"></i><i class="ln"></i><span class="nm off">Rutas</span><em><svg><use href="#chip"/></svg></em></div>
      <div class="row"><i class="cb"></i><i class="dot" style="background:#e0608a"></i><span class="nm off">MachalaQgis</span></div>
      <div class="row"><i class="cb"></i><i class="dot" style="background:#f09a2a"></i><span class="nm off">Machala</span></div>
      <div class="row"><i class="cb"></i><i class="sw" style="background:#bc444a"></i><span class="nm off">Machala</span></div>
    </div>
    <div class="split"></div>
    <div class="dtitle nav"><span>Navegador</span><svg><use href="#float"/></svg><svg><use href="#close"/></svg></div>
    <div class="dtools">
      <svg><use href="#addlay"/></svg><svg><use href="#refresh"/></svg><svg><use href="#funnel"/></svg><svg><use href="#collapse"/></svg><svg><use href="#info"/></svg>
    </div>
    <div class="browser">
      <div class="blist">
        <div class="row"><i class="tw"></i><svg><use href="#star"/></svg><span>Favoritos</span></div>
        <div class="row"><i class="tw r"></i><svg><use href="#bmks"/></svg><span>Marcadores espaciales</span></div>
        <div class="row"><i class="tw r"></i><svg><use href="#foldp"/></svg><span>Inicio del proyecto</span></div>
        <div class="row"><i class="tw r"></i><svg><use href="#foldh"/></svg><span>Inicio</span></div>
        <div class="row"><i class="tw r"></i><svg><use href="#fold"/></svg><span>C:\</span></div>
        <div class="row"><i class="tw r"></i><svg><use href="#fold"/></svg><span>D:\</span></div>
        <div class="row"><i class="tw"></i><svg><use href="#gpkg"/></svg><span>GeoPackage</span></div>
        <div class="row"><i class="tw"></i><svg><use href="#feather"/></svg><span>SpatiaLite</span></div>
        <div class="row"><i class="tw"></i><svg><use href="#pg"/></svg><span>PostGIS</span></div>
        <div class="row"><i class="tw"></i><svg><use href="#hana"/></svg><span>SAP HANA</span></div>
      </div>
      <div class="sbar"><i class="sb up"></i><i class="thumb"></i><i class="track"></i><i class="sb down"></i></div>
    </div>
  </section>
  <div class="vs"></div>

  <section class="canvas">
    <div class="msg">
      <svg class="tick" viewBox="0 0 24 18"><path d="M1 3l6 7L23.500 1 6 17z" fill="#2fd02f" stroke="#12751a"/></svg>
      <div class="mtext"><b>Capa exportada:</b><span>La capa vectorial se ha guardado correctamente en</span> <a>D:\ERICK\5to semestre\Geo\semana3\datos\puntos</a><br><a class="second">ejercicio2.shp</a></div>
      <div class="spin"><i>-</i><i>-</i></div>
      <span class="more">2 more</span>
      <svg class="x" viewBox="0 0 18 18"><circle cx="9" cy="9" r="8.300" fill="#2f3331"/><path d="M5.500 5.500l7 7M12.500 5.500l-7 7" stroke="#fff" stroke-width="2.500"/></svg><i class="ar"></i>
    </div>
    <svg class="mapview" viewBox="0 0 755 509">
      <g transform="translate(18 45) scale(.33333)" stroke="#352c29" stroke-width="3.400" stroke-linejoin="round">
        <path fill="#a57058" d="M325 31L329 38 342 50 354 53 365 53 364 66 352 94 350 110 340 118 329 120 328 140 340 150 346 160 353 165 357 175 353 190 358 201 365 206 378 203 385 199 394 201 412 195 424 195 433 188 440 195 448 191 466 191 483 197 490 200 508 200 516 206 524 206 532 216 539 228 551 235 561 237 569 231 576 236 578 252 597 261 621 274 648 292 661 306 665 325 680 346 696 355 722 353 738 351 750 359 761 378 790 420 790 640 702 647 695 641 677 642 668 650 652 665 630 666 605 675 592 675 582 696 585 706 577 706 565 690 566 663 558 666 552 674 534 665 526 671 514 663 503 660 493 663 484 657 475 661 468 657 454 666 435 671 418 679 399 672 388 667 367 675 355 682 345 672 335 658 318 650 292 639 262 641 164 651 162 672 150 678 130 679 114 670 113 652 103 648 103 640 113 634 107 620 96 612 94 590 93 570 91 560 78 547 59 540 44 527 32 516 26 507 25 489 34 469 49 457 57 459 67 460 72 442 84 430 88 410 98 394 101 379 112 369 119 362 118 342 120 320 129 302 128 275 122 256 119 232 128 220 136 234 145 228 147 239 160 232 169 226 188 220 200 216 204 208 201 198 208 193 200 174 199 158 212 151 219 150 223 137 221 105 232 92 248 74 263 58 282 53 302 42z"/>
        <path fill="#a57058" d="M760 748L738 757 735 765 731 757 727 748 722 755 722 765 714 764 710 773 710 790 704 806 693 812 684 812 678 819 665 813 664 801 652 796 636 798 624 797 614 804 610 815 598 819 586 829 573 831 566 842 550 840 547 850 547 868 540 878 543 892 540 907 531 922 525 934 520 942 510 946 502 966 492 986 487 1002 500 1001 511 993 518 979 530 965 532 950 530 943 543 935 564 938 579 946 597 958 610 949 634 942 652 937 663 931 664 903 680 890 695 882 709 874 725 884 735 882 748 886 760 890 775 904 791 910 806 909 810 920 803 936 819 956 828 964 843 972 859 986 868 1010 871 1040 874 1070 886 1090 895 1110 900 1129 914 1143 919 1165 914 1198 905 1224 922 1240 944 1238 967 1237 997 1267 1015 1243 1028 1221 1032 1204 1051 1186 1069 1199 1088 1200 1099 1206 1111 1184 1111 1168 1200 1166 1214 1160 1219 1142 1225 1133 1260 1130 1264 1124 1280 1130 1297 1124 1314 1096 1320 1070 1333 1036 1334 1024 1372 1024 1370 1000 1361 974 1349 957 1333 945 1332 912 1315 893 1313 880 1280 870 1000 950 971 976 932 945 932 930 860 870z"/>
        <path fill="#fff" d="M932 928L932 946 971 974 992 954z"/>
        <g fill="none"><path d="M971 976L985 1006 993 1028 1010 1046 1034 1066 1020 1067 1022 1078 1038 1083 1060 1099 1082 1120 1088 1130 1100 1142 1111 1170M725 482L652 508 649 528 662 536 665 558 660 570 667 584 698 574 697 642M703 600V646M730 440L725 452 728 478M200 216L205 222 219 224 236 239 256 247 278 242 308 257 325 248 341 256M183 224L191 235 190 248 197 258 194 269 199 273M201 198L218 200"/><path stroke-width="4.500" d="M119 365L130 360 142 358 148 348 149 335 154 326 163 318 170 310 188 308 201 313 200 318M88 414L110 413 122 397 138 401 145 409 151 417 155 440M84 423L84 436 100 443M142 446L160 447 176 442 195 442 202 432 217 432 215 423 207 415"/><path stroke-width="6" d="M192 341L208 344 221 355 228 366 226 379 216 368 207 380 200 370 184 373 180 390 170 407 177 412 161 419 153 422M170 410L184 394 183 374 200 366 215 374 204 385M168 398L180 402M74 460L77 480 88 500 106 505 118 497 128 505 121 514 110 506M53 463L54 480M58 465L69 480"/><path stroke-width="4.500" d="M78 545L94 550 108 540 124 540 130 551 115 558"/></g>
        <path fill="#fff" stroke="none" d="M222 362h9v10h-9zM170 308h9v6h-9zM149 410h6v7h-6zM152 422h6v5h-6z"/>
        <circle cx="1079" cy="585" r="375.500" fill="#91512d" stroke="#463226" stroke-width="3"/>
        <circle cx="1077" cy="585" r="10.500" fill="#86b573" stroke="#29331f" stroke-width="3.500"/>
      </g>
    </svg>
  </section>
  <div class="vs two"></div>

  <section class="dock right">
    <div class="dtitle"><span>Caja de herramientas de Procesos</span><svg><use href="#float"/></svg><svg><use href="#close"/></svg></div>
    <div class="dtools">
      <svg class="menu" viewBox="0 0 16 16"><use href="#gears" width="16" height="16"/><path d="M12 13h5l-2.500 3z" fill="#444"/></svg><svg class="menu" viewBox="0 0 16 16"><use href="#py" width="16" height="16"/><path d="M12 13h5l-2.500 3z" fill="#444"/></svg><svg class="lt"><use href="#clock"/></svg><svg><use href="#doc"/></svg><i class="ds"></i><svg><use href="#note"/></svg><i class="ds"></i><svg><use href="#wrench"/></svg>
    </div>
    <div class="find"><svg><use href="#mag"/></svg><span>ruta</span><svg class="clr" viewBox="0 0 14 12"><path d="M4.500 1H13v10H4.500L.5 6z" fill="#777"/><path d="M6 3.500l5 5M11 3.500l-5 5" stroke="#fff" stroke-width="1.100"/></svg></div>
    <div class="tree">
      <div class="row cur"><i class="tw d"></i><svg><use href="#clk"/></svg><span>Usado recientemente</span></div>
      <div class="row c"><svg><use href="#gear"/></svg><span>Puntos a ruta</span></div>
      <div class="row c"><svg><use href="#gear"/></svg><span>Puntos a ruta</span></div>
      <div class="row"><i class="tw d"></i><svg><use href="#qgis"/></svg><span>Análisis de redes</span></div>
      <div class="row c"><svg><use href="#route"/></svg><span>Ruta más corta (capa a punto)</span></div>
      <div class="row c"><svg><use href="#route"/></svg><span>Ruta más corta (punto a capa)</span></div>
      <div class="row c"><svg><use href="#route"/></svg><span>Ruta más corta (punto a punto)</span></div>
      <div class="row"><i class="tw d"></i><svg><use href="#qgis"/></svg><span>Creación de vectores</span></div>
      <div class="row c"><svg><use href="#gear"/></svg><span>Puntos a ruta</span></div>
      <div class="row"><i class="tw d"></i><svg><use href="#qgis"/></svg><span>GPS</span></div>
      <div class="row c"><svg><use href="#gps"/></svg><span>Cargar datos GPS a dispositivo</span></div>
      <div class="row c"><svg><use href="#gps"/></svg><span>Convertir datos GPS</span></div>
      <div class="row c"><svg><use href="#gps"/></svg><span>Convertir objeto tipo GPX</span></div>
      <div class="row c"><svg><use href="#gps"/></svg><span>Descargar datos GPS de dispositivo</span></div>
    </div>
  </section>
</main>

<footer class="status">
  <div class="fld loc"><svg><use href="#mag"/></svg><span>Escriba para localizar (Ctrl+K)</span></div>
  <span class="lb l1">Coordenada</span><div class="fld co">607951,9645158</div><svg class="s16 ex"><use href="#extent"/></svg>
  <span class="lb l2">Escala</span><div class="fld sc"><span>1:302137</span><i class="drop"></i></div><svg class="s16 lk"><use href="#lock"/></svg>
  <span class="lb l3">Amplificador</span><div class="fld am"><span>100%</span><i class="ud"></i></div>
  <span class="lb l4">Rotación</span><div class="fld am"><span>0.0 °</span><i class="ud"></i></div>
  <i class="cb on"></i><span class="lb l5">Representar</span><svg class="s16"><use href="#globe"/></svg><span class="lb l6">EPSG:32717</span><svg class="s16 bb"><use href="#bubble"/></svg>
</footer>

<div class="taskbar">
  <svg class="win" viewBox="0 0 16 16"><path d="M0 2.300L6.700 1.300V7.500H0zM7.500 1.200L16 0v7.500H7.500zM0 8.400h6.700v6.200L0 13.700zM7.500 8.400H16V16l-8.500-1.200z" fill="#000"/></svg>
  <svg class="srch" viewBox="0 0 18 18"><circle cx="11" cy="6.500" r="5.300" fill="none" stroke="#111" stroke-width="1.300"/><path d="M7.500 10.500L1 17" stroke="#111" stroke-width="1.300"/></svg>
  <div class="apps">
    <span class="app run"><svg viewBox="0 0 24 24"><path d="M2 3h8l2 2.500h10V9H2z" fill="#d7911c"/><path d="M1.500 6h21v14h-21z" fill="#fcd35e"/><path d="M5 21v-7.500q0-1.500 1.500-1.500h11q1.500 0 1.500 1.500V21h-3.500v-5h-7v5z" fill="#3c8bd0"/></svg></span>
    <span class="app"><svg viewBox="0 0 24 24"><circle cx="12" cy="12" r="11.500" fill="#1468b8"/><path d="M.8 10C3 2 9 0 13 .5c7 .5 11 6 10.500 11-.5 4-6 5.500-9.500 3.500 2-3 0-7-4-7.500C6 7 2 8.500.8 10z" fill="#36c1b0"/><path d="M13 .5c7 .5 11 6 10.500 11-.5 4-6 5.500-9.500 3.500 1-1.500 2-3 0-6 4 0 2-6-4-8z" fill="#62cf62" opacity=".75"/><path d="M9 11c-3 4 0 10 5 11 3 .2 6-1.500 7.500-4-5 2-11-1-12.500-7z" fill="#e4d5d1"/><path d="M8 10c-4 5 0 12 5 13.400C8 24 3 20 2 16c0-4 3-6 6-6z" fill="#1e8fdb"/></svg></span>
    <span class="app"><svg viewBox="0 0 24 24"><path d="M8 5V2.500Q8 1 9.500 1h5Q16 1 16 2.500V5" fill="none" stroke="#1c91d8" stroke-width="2"/><path d="M1 5h22v15q0 3-3 3H4q-3 0-3-3z" fill="#15477d"/><path d="M7.500 9.500h4v4h-4z" fill="#f25022"/><path d="M12.500 9.500h4v4h-4z" fill="#7fba00"/><path d="M7.500 14.500h4v4h-4z" fill="#00a4ef"/><path d="M12.500 14.500h4v4h-4z" fill="#ffb900"/></svg></span>
    <span class="app"><svg viewBox="0 0 24 24"><ellipse cx="12" cy="8" rx="10.500" ry="6" fill="#f5f0ef" stroke="#d84b50" stroke-width="1.500" transform="rotate(-18 12 8)"/><path d="M11 8l8 9M20 9l-7 8" stroke="#8aa0b5" stroke-width="1.700"/><circle cx="13" cy="18.500" r="2.500" fill="none" stroke="#3e7fb8" stroke-width="1.600"/><circle cx="19.500" cy="19" r="2.500" fill="none" stroke="#3e7fb8" stroke-width="1.600"/></svg></span>
    <span class="app"><svg viewBox="0 0 24 24"><ellipse cx="12" cy="12" rx="11" ry="11.500" fill="#dc1824"/><ellipse cx="12" cy="12" rx="4.800" ry="8.500" fill="#e6d8d4"/></svg></span>
    <span class="app"><svg viewBox="0 0 24 24"><path d="M0 8L12 0l12 8v15H0z" fill="#0a5aa6"/><path d="M1 8h22v9H1z" fill="#f4f4f4"/><path d="M0 8l12 9 12-9v15H0z" fill="#2b9ce6"/><path d="M0 23L12 13.500 24 23z" fill="#1683d8"/></svg></span>
    <span class="app run act"><svg viewBox="0 0 24 24"><circle cx="12" cy="12" r="11.800" fill="#75aadb"/><text x="6.700" y="17.500" font-family="Liberation Serif" font-size="16" fill="#fff">R</text></svg></span>
    <span class="app run"><svg><use href="#qgis"/></svg></span>
    <span class="app run"><svg viewBox="0 0 24 24"><circle cx="11" cy="11" r="11" fill="#fbc116"/><path d="M11 11L1.500 5.500A11 11 0 0 1 21 6.500H11z" fill="#e33b2e"/><path d="M1.500 5.500A11 11 0 0 0 9.500 22L14 14l-7-1z" fill="#249a48"/><circle cx="11" cy="11" r="4.800" fill="#3c7de8" stroke="#fff"/><circle cx="17" cy="17" r="7.300" fill="#174f8d"/><text x="14.300" y="20.700" font-family="Open Sans" font-size="9.500" fill="#fff">E</text></svg></span>
  </div>
  <svg class="wx" viewBox="0 0 24 22"><path d="M9 2a6 6 0 1 0 6 9A7 7 0 0 1 9 2z" fill="#f5b52e"/><path d="M6 20a4 4 0 0 1 1-7.500 5.500 5.500 0 0 1 10 0 3.800 3.800 0 0 1 2 7.500z" fill="#eef1f6" stroke="#cfd6df" stroke-width=".5"/></svg>
  <svg class="tray" viewBox="0 0 120 18" fill="none" stroke="#222" stroke-width="1.300"><path d="M2 12l5.500-5.500L13 12"/><path d="M26 14.500a4 4 0 0 1 0-6.500 5.500 5.500 0 0 1 9-.5 3.700 3.700 0 0 1 1 7z" fill="#999"/><path d="M50.500 4.500h12.500v7.500H50.500M57 12v3M53 15.500h9M48.500 9v6h4M45.500 3.500h5v5.500h-5z"/><path d="M72 7h2.500l4-4v12l-4-4H72zM81 6q2 3 0 6M83.500 4q3.500 5 0 10M86 2.500q4.500 6.500 0 13"/><path d="M96.500 3.500h21v11h-21z"/><path d="M99 6.500h17M99 9h17M99 12h2M114 12h2" stroke-dasharray="1.200 1"/><path d="M102 12h11" stroke-width="1"/></svg>
  <span class="esp">ESP</span>
  <span class="time">1:20<br>01/07/2022</span>
  <svg class="noti" viewBox="0 0 26 24"><path d="M1 1h16v14H9l-3 3v-3H1z" fill="#111"/><path d="M4 5h10M4 8h10M4 11h6" stroke="#fff" stroke-width="1"/><circle cx="16.500" cy="15" r="7.500" fill="#ddd3cb" stroke="#555"/><text x="14" y="19.500" font-family="Open Sans" font-size="12" fill="#111">1</text></svg>
  <i class="peek"></i>
</div>
</div>
</body>
</html>
```

FILE: styles.css
```css
* { box-sizing: border-box; }
body { margin: 0; font-family: "Open Sans", "Noto Sans", sans-serif; font-size: 12px; color: #111; overflow: hidden; }
i { font-style: normal; }
svg { display: block; flex: none; }
.defs { position: absolute; width: 0; height: 0; }
.window { width: 1366px; height: 768px; display: flex; flex-direction: column; background: #efefef; overflow: hidden; }

.titlebar { height: 23px; background: #fff; display: flex; align-items: center; flex: none; }
.logo { width: 17px; height: 17px; margin: 0 4px 1px 2px; }
.caption { color: #888; font-size: 11.5px; letter-spacing: -.1px; flex: 1; }
.winbtns { width: 120px; height: 16px; margin: 0 0 3px; overflow: visible; }

.menubar { height: 20px; flex: none; display: flex; padding-left: 10px; line-height: 20px; color: #8b8b8b; border-bottom: 1px solid #d4d4d4; white-space: nowrap; font-size: 11.5px; letter-spacing: -.05px; }
.menubar span { flex: none; }
.menubar u { text-underline-offset: 2px; }

.toolbar { height: 39px; flex: none; display: flex; align-items: center; background: linear-gradient(#fafafa, #ededed); border-bottom: 1px solid #b4b4b4; }
.toolbar.last { height: 38px; }
.toolbar b { width: 33px; height: 31px; display: flex; align-items: center; justify-content: center; flex: none; font-weight: 400; }
.toolbar b.on { background: #dcdcdc; border: 1px solid #aaa; border-radius: 3px; margin: 0 1px; width: 31px; }
.toolbar svg { width: 24px; height: 24px; }
.toolbar b.dim, .toolbar .ar.dim { opacity: .5; }
.hd { flex: none; width: 6px; height: 18px; margin: 0 3px 0 7px; background-image: radial-gradient(circle at 1px 1px, #d0d0d0 .6px, transparent 1px); background-size: 3px 3px; }
.hd.first { margin: 0 2px 0 4px; }
.hd.far { margin-left: 64px; }
.sep { flex: none; width: 1px; height: 28px; margin: 0 3px; background: #d2d2d2; }
.ar { flex: none; width: 12px; display: flex; justify-content: center; }
.ar::before { content: ""; border: 4px solid transparent; border-top-color: #555; border-bottom: 0; }

.work { flex: 1; display: flex; min-height: 0; padding-top: 1px; }
.rail { width: 39px; flex: none; background: linear-gradient(90deg, #f9f9f9, #ececec); border-right: 1px solid #b9b9b9; display: flex; flex-direction: column; align-items: center; padding: 5px 0 0 1px; gap: 8px; }
.rail svg { width: 24px; height: 24px; }
.hdh { width: 18px; height: 6px; margin-bottom: -2px; background-image: radial-gradient(circle at 1px 1px, #d0d0d0 .6px, transparent 1px); background-size: 3px 3px; }
.rule { width: 21px; height: 1px; background: #c9c9c9; margin: -1px 0; }

.dock { display: flex; flex-direction: column; flex: none; }
.dock.left { width: 276px; padding-left: 1px; }
.dock.right { width: 282px; }
.dtitle { height: 20px; display: flex; align-items: center; padding: 0 1px 0 4px; gap: 2px; flex: none; }
.dtitle span { flex: 1; letter-spacing: -.4px; }
.dtitle svg { width: 12px; height: 12px; }
.dtools { height: 30px; flex: none; display: flex; align-items: center; padding: 0 0 3px 8px; gap: 9px; }
.dtools svg { width: 16px; height: 16px; }
.dtools svg.menu { overflow: visible; }
.dtools .ar { margin: 0 -5px; }
.layers { height: 262px; flex: none; background: #fff; border: 1px solid #a9a9a9; }
.row { height: 18px; display: flex; align-items: center; white-space: nowrap; flex: none; }
.row.cur { background: #efefef; }
.layers .row { padding-left: 23px; }
.cb { width: 14px; height: 14px; flex: none; background: #fff; border: 1px solid #c0c0c0; display: flex; align-items: center; justify-content: center; }
.cb.on::before { content: ""; width: 5px; height: 8px; border: solid #111; border-width: 0 2px 2px 0; transform: translateY(-1px) rotate(40deg); }
.dot { width: 7px; height: 7px; border-radius: 50%; border: 1px solid #555; margin: 0 11px 0 10px; flex: none; }
.sw { width: 16px; height: 16px; border: 1px solid #4445; margin: 0 6px; flex: none; }
.ln { width: 14px; height: 2px; background: #a08bb5; margin: 0 6px; flex: none; }
.nm { flex: 1; font-weight: 700; font-size: 11.500px; letter-spacing: -.25px; }
.nm.off { color: #858585; font-style: italic; letter-spacing: .2px; }
.layers em { width: 17px; height: 17px; background: #f4f4f4; border: 1px solid #ddd; margin-right: 4px; color: #777; display: flex; align-items: center; justify-content: center; }
.layers em.blue { color: #7f9cbb; }
.layers em svg { width: 14px; height: 14px; }
.split { flex: none; background: radial-gradient(circle at 1px 1px, #bbb .6px, transparent 1px) 0 0 / 3px 3px; width: 16px; height: 3px; margin: 2px auto 1px; }
.dtitle.nav { height: 20px; }
.nav + .dtools { height: 30px; gap: 9px; padding-bottom: 2px; }
.browser { flex: 1; min-height: 0; display: flex; background: #fff; border: 1px solid #a9a9a9; }
.blist { flex: 1; overflow: hidden; }
.blist svg, .tree svg { width: 16px; height: 16px; }
.blist .row { padding-left: 4px; }
.tw { width: 8px; flex: none; display: flex; justify-content: center; }
.blist .tw { margin-right: 7px; }
.blist span { margin-left: 6px; letter-spacing: -.4px; }
.tw.r::before { content: ""; border: 4px solid transparent; border-left: 5px solid #555; border-right: 0; }
.tw.d::before { content: ""; border: 4px solid transparent; border-top: 5px solid #555; border-bottom: 0; }
.sbar { width: 14px; flex: none; border-left: 1px solid #bbb; display: flex; flex-direction: column; }
.sb { height: 14px; background: #f6f6f6; display: flex; align-items: center; justify-content: center; }
.sb::before { content: ""; border: 4px solid transparent; }
.sb.up { border-bottom: 1px solid #bbb; }
.sb.up::before { border-bottom-color: #555; border-top: 0; }
.sb.down { border-top: 1px solid #bbb; }
.sb.down::before { border-top-color: #555; border-bottom: 0; }
.thumb { height: 68px; background: #f7f7f7; border-bottom: 1px solid #bbb; }
.track { flex: 1; background: #dcdcdc; }

.vs { width: 6px; flex: none; background: radial-gradient(circle at 1px 1px, #bbb .6px, transparent 1px) 2px 0 / 3px 3px; height: 17px; align-self: center; }

.canvas { width: 757px; flex: none; background: #fff; border: 1px solid #aaa; border-top: 0; display: flex; flex-direction: column; }
.msg { height: 30px; flex: none; background: #dff0d8; border: 1px solid #8f9f88; border-width: 1px 0; display: flex; align-items: center; font: 11px "DejaVu Sans Condensed", "DejaVu Sans", sans-serif; overflow: hidden; }
.tick { width: 24px; height: 18px; margin-left: 9px; }
.mtext { width: 598px; margin-left: 10px; height: 28px; padding-top: 8px; line-height: 13px; white-space: nowrap; overflow: hidden; letter-spacing: -.2px; flex: none; }
.mtext b { letter-spacing: .15px; margin-right: 1px; }
.mtext a { color: #38871f; text-decoration: underline; letter-spacing: -.04px; }
.spin { width: 15px; margin-left: 1px; display: flex; flex-direction: column; gap: 1px; }
.spin i { height: 11px; line-height: 7px; text-align: center; background: #efefef; border: 1px solid #888; border-top-color: #eee; border-left-color: #eee; color: #777; }
.more { font-style: italic; margin-left: 7px; width: 51px; letter-spacing: -.4px; }
.x { width: 18px; height: 18px; margin-right: 1px; }
.mapview { width: 755px; height: 509px; }

.find { height: 22px; flex: none; background: #fff; border: 1px solid #aaa; border-radius: 3px; display: flex; align-items: center; padding: 0 8px; }
.find svg { width: 14px; height: 14px; }
.find span { flex: 1; margin-left: 5px; letter-spacing: -.2px; }
.tree { flex: 1; background: #fff; border: 1px solid #aaa; }
.tree .row { padding-left: 6px; }
.tree .row svg { margin-left: 9px; }
.tree .row.c { padding-left: 34px; }
.tree span { margin-left: 6px; letter-spacing: -.35px; }
.right .dtools { padding-left: 9px; gap: 9px; }
.lt { opacity: .8; }
.ds { width: 1px; height: 13px; background: #ccc; margin: 0 -2px; }

.status { height: 28px; flex: none; display: flex; align-items: center; padding: 1px 0 0 4px; font: 11px "DejaVu Sans Condensed", "DejaVu Sans", sans-serif; letter-spacing: -.1px; white-space: nowrap; }
.fld { height: 22px; flex: none; background: #fff; border: 1px solid #aaa; border-radius: 3px; display: flex; align-items: center; padding-left: 5px; }
.fld span { flex: 1; }
.loc { width: 253px; color: #777; padding-left: 8px; letter-spacing: -.27px; }
.loc svg { width: 13px; height: 13px; margin-right: 6px; }
.lb { flex: none; }
.l1 { margin-left: 257px; width: 63px; }
.co { width: 97px; }
.s16 { width: 16px; height: 16px; }
.ex { margin-left: 3px; }
.l2 { margin-left: 13px; width: 34px; }
.sc { width: 81px; padding-left: 3px; }
.drop { width: 21px; align-self: stretch; border-left: 1px solid #bbb; display: flex; align-items: center; justify-content: center; }
.drop::before { content: ""; border: 4px solid transparent; border-top-color: #666; border-bottom: 0; }
.lk { margin-left: 10px; }
.l3 { margin-left: 6px; width: 62px; letter-spacing: -.35px; }
.am { width: 84px; }
.ud { width: 14px; align-self: stretch; border-left: 1px solid #bbb; display: flex; flex-direction: column; gap: 4px; align-items: center; justify-content: center; }
.ud::before, .ud::after { content: ""; border: 4px solid transparent; }
.ud::before { border-bottom-color: #666; border-top: 0; }
.ud::after { border-top-color: #666; border-bottom: 0; }
.l4 { margin-left: 8px; width: 52px; }
.status .cb { margin-left: 6px; }
.l5 { margin-left: 4px; width: 76px; }
.l6 { margin-left: 1px; width: 83px; }

.taskbar { height: 40px; flex: none; display: flex; align-items: center; background: linear-gradient(90deg, #f1e4c1 0, #ece4b9 13%, #ece3bd 23%, #e2d4cd 34%, #e5d7d3 52%, #e6d9cd 60%, #ede6b9 69%, #f0e5bb 78%, #e7d8c9 86%, #e4d4d0 100%); }
.win { width: 16px; height: 16px; margin-left: 16px; }
.srch { width: 18px; height: 18px; margin-left: 31px; }
.apps { display: flex; margin-left: 421px; height: 40px; gap: 9.15px; }
.app { width: 40px; height: 40px; display: flex; align-items: center; justify-content: center; }
.app svg { width: 24px; height: 24px; }
.app.run { border-bottom: 2px solid #cc8022; padding-top: 2px; }
.app.act { border-image: linear-gradient(90deg, #cc8022 80%, #dfa35e 80%) 1; border-width: 0 0 2px; }
.wx { width: 24px; height: 22px; margin-left: 108px; }
.tray { width: 120px; height: 18px; margin-left: 16px; }
.esp { margin-left: 11px; width: 24px; font-size: 11.500px; letter-spacing: -.4px; }
.time { width: 76px; text-align: center; line-height: 18px; font-size: 11.500px; letter-spacing: -.2px; }
.noti { width: 26px; height: 24px; margin-left: 9px; }
.peek { width: 1px; height: 40px; background: #c5b8b2; margin-left: 11px; }
```
